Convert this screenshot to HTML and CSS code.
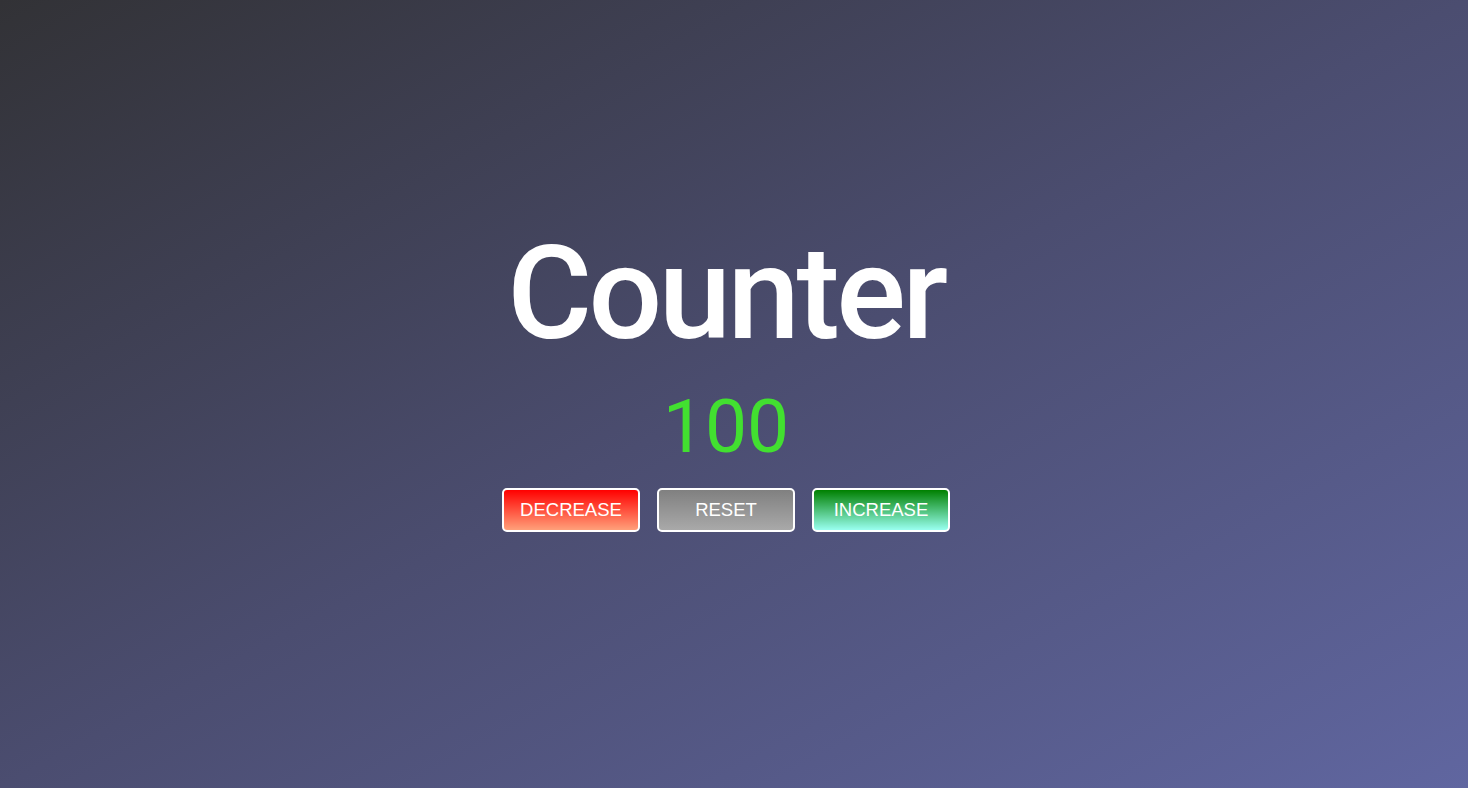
FILE: index.html
```html
<!DOCTYPE html>
<html>
<head>
<meta charset="utf-8">
<link rel="stylesheet" href="styles.css">
</head>
<body>
<main class="counter">
  <h1 class="title">Counter</h1>
  <div class="value">100</div>
  <div class="buttons">
    <button class="btn btn-decrease">DECREASE</button>
    <button class="btn btn-reset">RESET</button>
    <button class="btn btn-increase">INCREASE</button>
  </div>
</main>
</body>
</html>
```
FILE: styles.css
```css
html, body {
  margin: 0;
  height: 100%;
}
body {
  background: linear-gradient(to bottom right, #323236 0%, #4b4d70 50%, #6066a0 100%);
  font-family: Roboto, "Liberation Sans", sans-serif;
}
.counter {
  display: flex;
  flex-direction: column;
  align-items: center;
  padding-top: 219px;
  padding-right: 16px;
}
.title {
  margin: 0;
  font-size: 130px;
  font-weight: 500;
  color: #ffffff;
  line-height: 150px;
  letter-spacing: -3.5px;
}
.value {
  margin-top: 12px;
  font-size: 75px;
  line-height: 90px;
  color: #42e030;
}
.buttons {
  display: flex;
  gap: 17px;
  margin-top: 17px;
}
.btn {
  width: 138px;
  height: 44px;
  border: 2px solid #ffffff;
  border-radius: 5px;
  color: #ffffff;
  font-family: "Liberation Sans", Arial, sans-serif;
  font-size: 18.5px;
  padding: 0;
  cursor: pointer;
}
.btn-decrease {
  background: linear-gradient(#ff0000, #ffa07a);
}
.btn-reset {
  background: linear-gradient(#808080, #a9a9a9);
}
.btn-increase {
  background: linear-gradient(#008000, #99fff0);
}
```
